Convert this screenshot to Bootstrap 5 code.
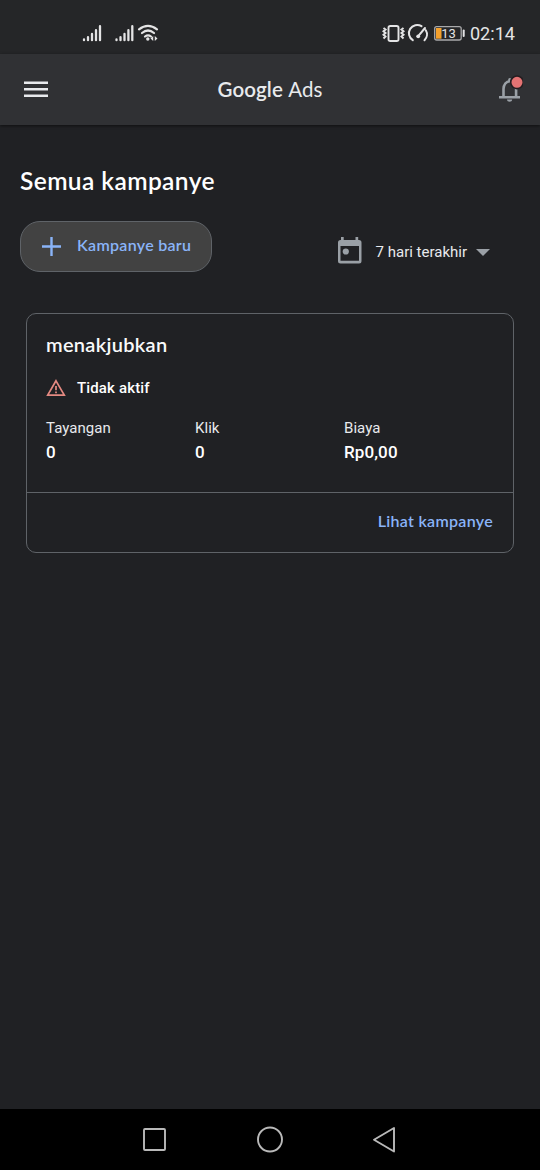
<!DOCTYPE html>
<html lang="id" data-bs-theme="dark">
<head>
<meta charset="utf-8">
<meta name="viewport" content="width=device-width, initial-scale=1">
<title>Google Ads</title>
<link href="https://cdn.jsdelivr.net/npm/bootstrap@5.3.0/dist/css/bootstrap.min.css" rel="stylesheet">
<style>
body{background:#202124;color:#f1f3f4;font-family:Roboto,sans-serif;height:1170px;overflow:hidden}
svg{display:block;flex:none}
.status{height:54px;background:#252628;padding:14px 25px 0 82px;color:#e4e4e5}
.clock{font-size:18.1px;line-height:24px;margin-top:8px}
.appbar{height:71px;background:#303134;padding:0 17px 2px 24px;box-shadow:0 1px 3px rgba(0,0,0,.55);z-index:1}
.gs{font-family:Lato,sans-serif;font-weight:600}
.brand{font-size:20.5px;line-height:24px;color:#e8eaed;letter-spacing:.1px;margin-right:5px}
.brand span{font-weight:400}
.page-title{font-size:24.5px;line-height:30px;color:#fff;letter-spacing:.4px;margin:41px 0 0 20px}
.tools{padding:25px 50px 0 20px}
.btn-new{width:192px;height:51px;border:1px solid #5f6368;border-radius:20px;background:#424242;color:#8ab4f8;font-size:16px;letter-spacing:.3px;padding:0 0 0 21px;gap:16px}
.btn-new:hover{background:#4a4a4a;color:#8ab4f8}
.new-label{margin-top:-3px}
.range{font-size:15px;line-height:20px;color:#e8eaed;padding-top:15px}
.range-label{margin-left:14px;margin-top:4px}
.caret{margin:4px 0 0 9px}
.camp{margin:41px 26px 0;height:240px;background:transparent;border:1px solid #5f6368;border-radius:10px}
.camp .card-body{padding:18px 19px 0}
.camp-name{font-size:20px;line-height:24px;color:#f8f9fa;letter-spacing:.3px}
.state{font-size:15px;line-height:20px;font-weight:500;gap:11px;margin-top:22px;color:#fff;letter-spacing:.15px}
.metrics{margin-top:20px;display:grid;grid-template-columns:149px 149px 1fr}
.metrics dt{font-weight:400;font-size:15px;line-height:20px;color:#e8eaed;letter-spacing:.05px}
.metrics dd{font-weight:500;font-size:17px;line-height:24px;margin:2px 0 0;color:#fff;letter-spacing:.1px}
.camp .card-footer{height:60px;background:transparent;border-top:1px solid #5f6368;padding:0 20px 3px 0}
.see{color:#8ab4f8;font-size:16px;text-decoration:none;letter-spacing:.3px}
.sysnav{height:61px;background:#000}
</style>
</head>
<body class="d-flex flex-column">
<div class="status d-flex justify-content-between">
  <svg width="80" height="34" viewBox="82 14 80 34" fill="none" stroke="#e4e4e5" stroke-linecap="round">
    <g stroke-width="2.300"><path d="M84 40.200v-.8M88 40.200v-3M92 40.200v-6.300M96 40.200v-10M100 40.200v-14"/><path d="M116.500 40.200v-.8M120.500 40.200v-3M124.500 40.200v-6.300M128.400 40.200v-10M132.300 40.200v-14"/></g>
    <path stroke-width="2.200" d="M139 29.300q9-7 18 0M142 33q6-5 12 0M145 36.500q3-2.300 6 0"/>
    <circle cx="147.800" cy="39" r="1.700" fill="#e4e4e5" stroke="none"/>
    <path fill="#e4e4e5" stroke="none" d="M153.200 36v5l-2.700-2.500zM154.800 36v5l2.700-2.500z"/>
  </svg>
  <div class="d-flex">
    <svg width="88" height="34" viewBox="382 14 88 34" fill="none" stroke="#e4e4e5">
      <rect x="388.500" y="26" width="10" height="15" rx="1.800" stroke-width="1.900"/>
      <path stroke-width="2" d="M383.500 28l2 1.500-2 1.700 2 1.800-2 1.700 2 1.800-2 2M403.500 28l-2 1.500 2 1.700-2 1.800 2 1.700-2 1.800 2 2"/>
      <path stroke-width="2" stroke-linecap="round" d="M412.800 40.200A8 8 0 0 1 421.500 26.200M425.800 30.200A8 8 0 0 1 424.500 40.200M417.800 36.600L425 28"/>
      <circle cx="418.200" cy="36.300" r="1.900" fill="#e4e4e5" stroke="none"/>
      <rect x="434.700" y="26.700" width="26.500" height="13.300" rx="2" stroke="#a9a9aa" stroke-width="1.300"/>
      <rect x="436" y="28" width="5.500" height="10.700" fill="#f4a02c" stroke="none"/>
      <path stroke-width="2" stroke-linecap="round" d="M463.700 30.500v5.500"/>
      <text x="441.300" y="38.200" font-family="Roboto,sans-serif" font-size="13" fill="#e4e4e5" stroke="none">13</text>
    </svg>
    <div class="clock">02:14</div>
  </div>
</div>
<header class="appbar d-flex align-items-center justify-content-between">
  <svg width="24" height="18" viewBox="0 0 24 18" fill="#e8eaed"><path d="M0 1.500h24v2.600H0zM0 8h24v2.600H0zM0 14.500h24v2.600H0z"/></svg>
  <div class="brand gs">Google <span>Ads</span></div>
  <svg width="26" height="30" viewBox="497 74 26 30"><path d="M503.500 97v-8c0-4.300 2.700-7.800 6.300-7.800s6.300 3.500 6.300 7.800v8" fill="none" stroke="#9aa0a6" stroke-width="2.600"/><path d="M508.200 82v-2.500a1.600 1.600 0 0 1 3.200 0V82zM499 96h21v2.500h-21zM507 99.500h5.200c0 3-5.200 3-5.200 0z" fill="#9aa0a6"/><circle cx="517" cy="82.300" r="6.300" fill="#e57373" stroke="#251e21" stroke-width="1.600"/></svg>
</header>
<main class="flex-grow-1">
  <h1 class="page-title gs">Semua kampanye</h1>
  <div class="tools d-flex justify-content-between align-items-start">
    <button class="btn btn-new gs d-flex align-items-center"><svg width="19" height="19" viewBox="0 0 19 19" stroke="#8ab4f8" stroke-width="2.400"><path d="M9.500 0v19M0 9.500h19"/></svg><span class="new-label">Kampanye baru</span></button>
    <div class="range d-flex align-items-center">
      <svg width="24" height="28" viewBox="338 236 24 28"><path fill="#9aa0a6" fill-rule="evenodd" d="M341 237h2.700v3h11.800v-3h2.700v3h.8a2.500 2.500 0 0 1 2.500 2.500v18.500a2.500 2.500 0 0 1-2.500 2.500h-18.500a2.500 2.500 0 0 1-2.500-2.500v-18.500a2.500 2.500 0 0 1 2.500-2.500h.5zM340.500 246v14.800h18.500V246z"/><circle cx="345.800" cy="251.500" r="3.100" fill="#9aa0a6"/></svg>
      <span class="range-label">7 hari terakhir</span>
      <svg class="caret" width="14" height="7" viewBox="0 0 14 7"><path d="M0 0h14L7 7z" fill="#9aa0a6"/></svg>
    </div>
  </div>
  <section class="card camp">
    <div class="card-body">
      <h2 class="camp-name gs mb-0">menakjubkan</h2>
      <div class="state d-flex align-items-center"><svg width="20" height="18" viewBox="0 0 20 18" fill="none" stroke="#e58a82" stroke-width="1.700"><path d="M10 1.800L18.300 16.200H1.700z"/><path d="M10 7v4.200M10 12.500v1.800"/></svg><span>Tidak aktif</span></div>
      <dl class="metrics mb-0">
        <div><dt>Tayangan</dt><dd>0</dd></div>
        <div><dt>Klik</dt><dd>0</dd></div>
        <div><dt>Biaya</dt><dd>Rp0,00</dd></div>
      </dl>
    </div>
    <div class="card-footer d-flex align-items-center justify-content-end"><a class="see gs" href="#">Lihat kampanye</a></div>
  </section>
</main>
<nav class="sysnav">
  <svg width="540" height="61" viewBox="0 1109 540 61" fill="none" stroke="#b9b9b9" stroke-width="1.900" stroke-linejoin="round"><rect x="144" y="1129" width="21" height="21" rx="1"/><circle cx="270" cy="1139.500" r="12"/><path d="M394 1128v23.500l-20-11.800z"/></svg>
</nav>
<script src="https://cdn.jsdelivr.net/npm/bootstrap@5.3.0/dist/js/bootstrap.bundle.min.js"></script>
</body>
</html>
